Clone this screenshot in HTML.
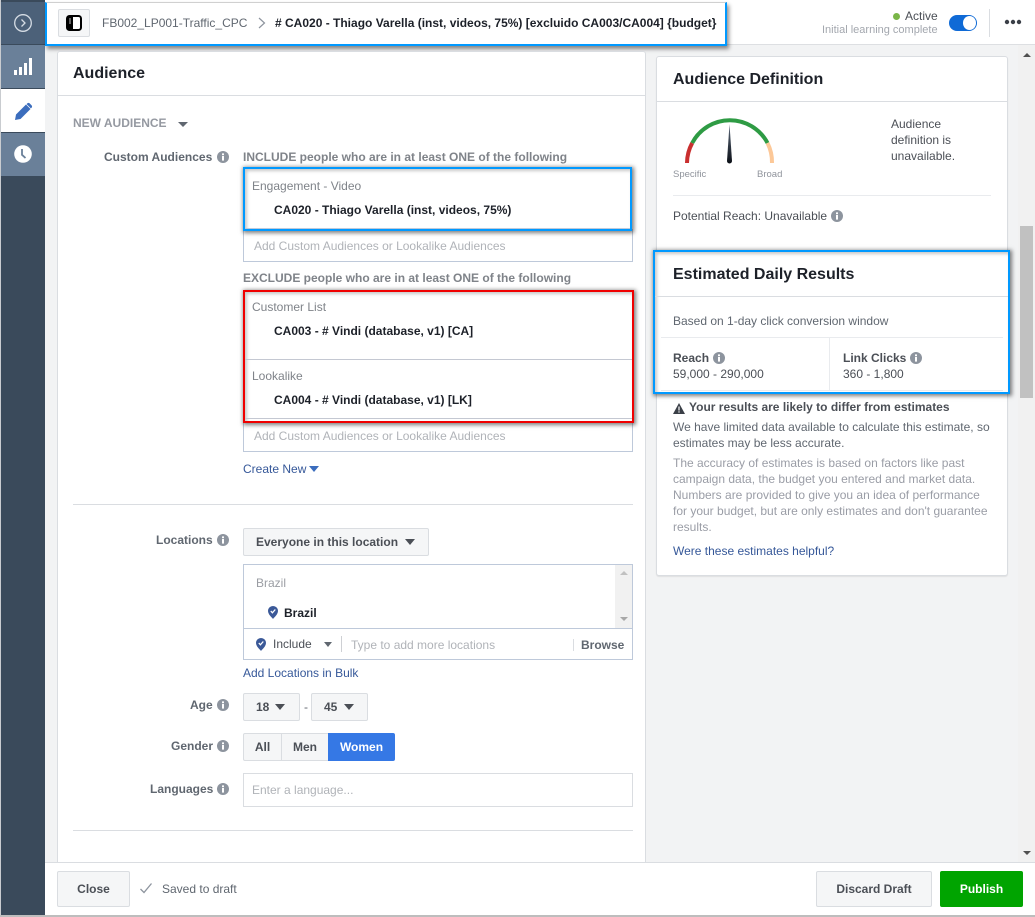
<!DOCTYPE html>
<html><head><meta charset="utf-8"><style>
html,body{margin:0;padding:0}
body{width:1035px;height:917px;position:relative;overflow:hidden;background:#f2f3f4;font-family:"Liberation Sans",Arial,sans-serif;font-size:12px;color:#1d2129}
.a{position:absolute}
.t{position:absolute;white-space:nowrap;line-height:16px}
.b{font-weight:bold}
.g{color:#606770}.l{color:#4b4f56}.p{color:#b0b3b8}.link{color:#365899}
.box{position:absolute;background:#fff;border:1px solid #bec9da;box-sizing:border-box}
.btn{position:absolute;box-sizing:border-box;background:#f5f6f7;border:1px solid #dadde1;border-radius:2px;color:#4b4f56;font-weight:bold;text-align:center}
.hr{position:absolute;height:1px;background:#dadde1}
.car{position:absolute;width:0;height:0;border-left:5.5px solid transparent;border-right:5.5px solid transparent;border-top:6px solid #4b4f56}
.i{position:absolute;width:12px;height:12px}
.hl{box-shadow:1px 1px 4px 1px rgba(0,0,0,.5),inset 2px 2px 3px rgba(0,0,0,.22)}
</style></head><body>
<svg width="0" height="0" style="position:absolute"><symbol id="inf" viewBox="0 0 12 12"><circle cx="6" cy="6" r="6" fill="#8d949e"/><rect x="5" y="5" width="2" height="4.6" fill="#fff"/><rect x="5" y="2.4" width="2" height="1.8" fill="#fff"/></symbol>
<symbol id="pin" viewBox="0 0 10 13"><path d="M5 13C3.5 11 0 8.5 0 4.8A5 4.8 0 0 1 10 4.8C10 8.5 6.5 11 5 13Z" fill="#3b5998"/><path d="M2.8 5L4.4 6.8L7.3 3.5" stroke="#fff" stroke-width="1.3" fill="none"/></symbol></svg>

<!-- sidebar -->
<div class="a" style="left:0;top:0;width:1px;height:917px;background:#c9ccd0"></div>
<div class="a" style="left:1px;top:0;width:44px;height:915px;background:#3a4a5b"></div>
<div class="a" style="left:1px;top:2px;width:44px;height:42px;background:#4c6179"></div>
<div class="a" style="left:1px;top:45px;width:44px;height:43px;background:#6a8099"></div>
<div class="a" style="left:1px;top:89px;width:44px;height:43px;background:#fff"></div>
<div class="a" style="left:1px;top:133px;width:44px;height:43px;background:#6a8099"></div>
<svg class="a" style="left:13px;top:13px" width="20" height="20" viewBox="0 0 20 20"><circle cx="10" cy="10" r="8.3" fill="none" stroke="#d5dce4" stroke-width="1.3"/><path d="M8.5 6.5L12 10L8.5 13.5" fill="none" stroke="#d5dce4" stroke-width="1.3"/></svg>
<svg class="a" style="left:13px;top:57px" width="20" height="20" viewBox="0 0 20 20" fill="#fff"><rect x="1" y="13" width="3" height="5"/><rect x="6" y="10" width="3" height="8"/><rect x="11" y="6" width="3" height="12"/><rect x="16" y="1" width="3" height="17"/></svg>
<svg class="a" style="left:14px;top:102px" width="19" height="19" viewBox="0 0 19 19"><path d="M1 18L2 12.5L12 2.5L16.500 7L6.500 17Z M13.200 1.500C14 .7 15 .7 15.800 1.500L17.500 3.200C18.300 4 18.300 5 17.500 5.800L16.900 6.400L12.600 2.100Z" fill="#3b6dbd"/></svg>
<svg class="a" style="left:14px;top:145px" width="18" height="18" viewBox="0 0 18 18"><circle cx="9" cy="9" r="8.800" fill="#fff"/><path d="M8 4V9.800L11.500 13" stroke="#6a8099" stroke-width="1.800" fill="none"/></svg>

<!-- top bar -->
<div class="a" style="left:45px;top:0;width:990px;height:44px;background:#fff;border-bottom:1px solid #dddfe2"></div>
<div class="a" style="left:45px;top:2px;width:682px;height:44px;box-sizing:border-box;border:2px solid #0099ff;border-top:1px solid #d0d0d0;background:#fff;box-shadow:2px 3px 4px rgba(0,0,0,.45)"></div>
<div class="a" style="left:58px;top:9px;width:32px;height:28px;box-sizing:border-box;background:#f5f6f7;border:1px solid #dadde1;border-radius:2px"></div>
<svg class="a" style="left:66px;top:15px" width="16" height="16" viewBox="0 0 16 16"><rect x="1" y="1" width="14" height="14" rx="2.500" fill="#fff" stroke="#000" stroke-width="2"/><path d="M1 2.500C1 1.500 1.500 1 2.500 1H7V15H2.500C1.500 15 1 14.500 1 13.500Z" fill="#000"/><path d="M3 4H5M3 6H5M3 8H5" stroke="#fff" stroke-width=".8"/></svg>
<div class="t g" style="left:102px;top:15px">FB002_LP001-Traffic_CPC</div>
<svg class="a" style="left:258px;top:17px" width="8" height="12" viewBox="0 0 8 12"><path d="M1 1L6.500 6L1 11" fill="none" stroke="#8d949e" stroke-width="1.200"/></svg>
<div class="t b" style="left:275px;top:15px;color:#1d2129">#  CA020 - Thiago Varella (inst, videos, 75%) [excluido CA003/CA004] {budget}</div>
<div class="a" style="left:893px;top:13px;width:7px;height:7px;border-radius:50%;background:#7ab648"></div>
<div class="t l" style="left:905px;top:8px">Active</div>
<div class="t p" style="left:822px;top:22px;font-size:11px;color:#a3a7ae;font-weight:400">Initial learning complete</div>
<div class="a" style="left:949px;top:15px;width:28px;height:16px;border-radius:8px;background:#0f6ad6"></div>
<div class="a" style="left:963px;top:16px;width:13px;height:14px;border-radius:50%;background:#fff"></div>
<div class="a" style="left:989px;top:9px;width:1px;height:28px;background:#dadde1"></div>
<svg class="a" style="left:1004px;top:19px" width="18" height="6" viewBox="0 0 18 6" fill="#3a3f47"><circle cx="3" cy="3" r="2.200"/><circle cx="9" cy="3" r="2.200"/><circle cx="15" cy="3" r="2.200"/></svg>

<!-- left card -->
<div class="a" style="left:57px;top:51px;width:589px;height:830px;box-sizing:border-box;background:#fff;border:1px solid #dadde1;border-radius:3px 3px 0 0"></div>
<div class="t b" style="left:73px;top:65px;font-size:16px;line-height:18px;color:#1d2129">Audience</div>
<div class="hr" style="left:58px;top:95px;width:587px"></div>
<div class="t b" style="left:73px;top:115px;color:#9599a1">NEW AUDIENCE</div>
<div class="car" style="left:178px;top:122px;border-left-width:5px;border-right-width:5px;border-top:5px solid #606770"></div>

<div class="t b g" style="left:104px;top:149px">Custom Audiences</div>
<svg class="i" style="left:217px;top:151px"><use href="#inf"/></svg>
<div class="t b g" style="left:243px;top:149px;color:#7f8389">INCLUDE people who are in at least ONE of the following</div>

<div class="box" style="left:243px;top:229px;width:390px;height:33px;border-top:none"></div>
<div class="t p" style="left:254px;top:238px">Add Custom Audiences or Lookalike Audiences</div>
<div class="a hl" style="left:243px;top:167px;width:389px;height:64px;box-sizing:border-box;border:2px solid #0099ff;background:#fff"></div>
<div class="a" style="left:245px;top:228px;width:385px;height:1px;background:#bec9da"></div>
<div class="t" style="left:252px;top:178px;color:#7f8389">Engagement - Video</div>
<div class="t b" style="left:274px;top:202px;color:#1d2129">CA020 - Thiago Varella (inst, videos, 75%)</div>

<div class="t b" style="left:243px;top:270px;color:#7f8389">EXCLUDE people who are in at least ONE of the following</div>
<div class="box" style="left:243px;top:420px;width:390px;height:32px;border-top:none"></div>
<div class="t p" style="left:254px;top:428px">Add Custom Audiences or Lookalike Audiences</div>
<div class="a hl" style="left:243px;top:290px;width:391px;height:133px;box-sizing:border-box;border:2px solid #f00000;background:#fff"></div>
<div class="a" style="left:245px;top:359px;width:387px;height:1px;background:#c4c8d2"></div>
<div class="a" style="left:245px;top:418px;width:387px;height:1px;background:#c4c8d2"></div>
<div class="t" style="left:252px;top:299px;color:#7f8389">Customer List</div>
<div class="t b" style="left:274px;top:323px;color:#1d2129">CA003 - # Vindi (database, v1) [CA]</div>
<div class="t" style="left:252px;top:368px;color:#7f8389">Lookalike</div>
<div class="t b" style="left:274px;top:392px;color:#1d2129">CA004 - # Vindi (database, v1) [LK]</div>

<div class="t link" style="left:243px;top:461px">Create New</div>
<div class="car" style="left:309px;top:466px;border-top-color:#3b6dbd"></div>
<div class="hr" style="left:73px;top:504px;width:560px"></div>

<div class="t b g" style="left:156px;top:532px">Locations</div>
<svg class="i" style="left:217px;top:534px"><use href="#inf"/></svg>
<div class="btn" style="left:243px;top:528px;width:186px;height:28px;line-height:26px;text-align:left;padding-left:12px">Everyone in this location</div>
<div class="car" style="left:405px;top:539px"></div>
<div class="box" style="left:243px;top:564px;width:390px;height:96px"></div>
<div class="a" style="left:615px;top:565px;width:17px;height:63px;background:#f1f1f1"></div>
<div class="car" style="left:620px;top:571px;border-left-width:4px;border-right-width:4px;border-top:none;border-bottom:4px solid #c1c1c1"></div>
<div class="car" style="left:620px;top:617px;border-left-width:4px;border-right-width:4px;border-top:4px solid #a8a8a8"></div>
<div class="t" style="left:256px;top:575px;color:#9a9da3">Brazil</div>
<svg class="a" style="left:268px;top:606px" width="10" height="13"><use href="#pin"/></svg>
<div class="t b" style="left:284px;top:605px;color:#1d2129">Brazil</div>
<div class="a" style="left:244px;top:628px;width:388px;height:1px;background:#bec9da"></div>
<svg class="a" style="left:256px;top:638px" width="10" height="13"><use href="#pin"/></svg>
<div class="t l" style="left:273px;top:636px">Include</div>
<div class="car" style="left:324px;top:642px;border-left-width:4.500px;border-right-width:4.500px;border-top:5px solid #606770"></div>
<div class="a" style="left:341px;top:636px;width:1px;height:16px;background:#ced0d4"></div>
<div class="t p" style="left:351px;top:637px">Type to add more locations</div>
<div class="a" style="left:573px;top:639px;width:1px;height:12px;background:#dadde1"></div>
<div class="t g b" style="left:581px;top:637px">Browse</div>
<div class="t link" style="left:243px;top:665px">Add Locations in Bulk</div>

<div class="t b g" style="left:190px;top:697px">Age</div>
<svg class="i" style="left:217px;top:699px"><use href="#inf"/></svg>
<div class="btn" style="left:243px;top:693px;width:57px;height:28px;line-height:26px;text-align:left;padding-left:12px;font-weight:bold">18</div>
<div class="car" style="left:275px;top:704px"></div>
<div class="t g" style="left:304px;top:699px">-</div>
<div class="btn" style="left:311px;top:693px;width:57px;height:28px;line-height:26px;text-align:left;padding-left:12px">45</div>
<div class="car" style="left:344px;top:704px"></div>

<div class="t b g" style="left:171px;top:738px">Gender</div>
<svg class="i" style="left:217px;top:740px"><use href="#inf"/></svg>
<div class="btn" style="left:243px;top:733px;width:39px;height:28px;line-height:26px;border-radius:2px 0 0 2px">All</div>
<div class="btn" style="left:281px;top:733px;width:48px;height:28px;line-height:26px;border-radius:0;border-left:1px solid #dadde1">Men</div>
<div class="btn" style="left:328px;top:733px;width:67px;height:28px;line-height:26px;background:#3578e5;border-color:#3578e5;color:#fff;border-radius:0 2px 2px 0">Women</div>

<div class="t b g" style="left:150px;top:781px">Languages</div>
<svg class="i" style="left:217px;top:783px"><use href="#inf"/></svg>
<div class="box" style="left:243px;top:773px;width:390px;height:34px;border-color:#dadde1"></div>
<div class="t p" style="left:252px;top:782px">Enter a language...</div>
<div class="hr" style="left:73px;top:830px;width:560px"></div>

<!-- right card -->
<div class="a" style="left:656px;top:56px;width:352px;height:520px;box-sizing:border-box;background:#fff;border:1px solid #dadde1;border-radius:3px;box-shadow:0 1px 1px rgba(0,0,0,.08)"></div>
<div class="t b" style="left:673px;top:71px;font-size:16px;line-height:18px">Audience Definition</div>
<div class="hr" style="left:657px;top:101px;width:350px"></div>
<svg class="a" style="left:680px;top:112px" width="100" height="56" viewBox="680 112 100 56">
<defs><linearGradient id="nd" x1="0" y1="1" x2="0" y2="0"><stop offset="0" stop-color="#0b0f16"/><stop offset="1" stop-color="#5d6a7c"/></linearGradient></defs>
<path d="M687 163A42.500 42.500 0 0 1 692.200 143" fill="none" stroke="#c92f2f" stroke-width="4"/>
<path d="M692.200 143A42.500 42.500 0 0 1 767.500 143" fill="none" stroke="#2e9b44" stroke-width="4"/>
<path d="M767.500 143A42.500 42.500 0 0 1 772 163" fill="none" stroke="#fcc898" stroke-width="4"/>
<path d="M729.500 124L732 161A2.500 2.500 0 0 1 727 161Z" fill="url(#nd)"/></svg>
<div class="t" style="left:673px;top:167px;font-size:9.500px;color:#90949c">Specific</div>
<div class="t" style="left:757px;top:167px;font-size:9.500px;color:#90949c">Broad</div>
<div class="t l" style="left:891px;top:116px">Audience</div>
<div class="t l" style="left:891px;top:132px">definition is</div>
<div class="t l" style="left:891px;top:148px">unavailable.</div>
<div class="hr" style="left:673px;top:195px;width:318px;background:#e9ebee"></div>
<div class="t l" style="left:673px;top:208px">Potential Reach: Unavailable</div>
<svg class="i" style="left:831px;top:210px"><use href="#inf"/></svg>

<div class="a hl" style="left:653px;top:250px;width:357px;height:144px;box-sizing:border-box;border:2px solid #0099ff;background:#fff"></div>
<div class="t b" style="left:673px;top:266px;font-size:16px;line-height:18px">Estimated Daily Results</div>
<div class="hr" style="left:655px;top:296px;width:353px"></div>
<div class="t g" style="left:673px;top:313px">Based on 1-day click conversion window</div>
<div class="hr" style="left:661px;top:337px;width:342px;background:#e9ebee"></div>
<div class="a" style="left:829px;top:338px;width:1px;height:52px;background:#e9ebee"></div>
<div class="hr" style="left:661px;top:390px;width:342px;background:#e9ebee"></div>
<div class="t l b" style="left:673px;top:350px">Reach</div>
<svg class="i" style="left:713px;top:352px"><use href="#inf"/></svg>
<div class="t l" style="left:673px;top:366px">59,000 - 290,000</div>
<div class="t l b" style="left:843px;top:350px">Link Clicks</div>
<svg class="i" style="left:910px;top:352px"><use href="#inf"/></svg>
<div class="t l" style="left:843px;top:366px">360 - 1,800</div>

<svg class="a" style="left:673px;top:403px" width="12" height="11" viewBox="0 0 12 11"><path d="M6 0L12 11H0Z" fill="#3a3f47"/><rect x="5.400" y="3.500" width="1.200" height="4" fill="#fff"/><rect x="5.400" y="8.300" width="1.200" height="1.300" fill="#fff"/></svg>
<div class="t b l" style="left:689px;top:399px">Your results are likely to differ from estimates</div>
<div class="t g" style="left:673px;top:419px">We have limited data available to calculate this estimate, so</div>
<div class="t g" style="left:673px;top:435px">estimates may be less accurate.</div>
<div class="t" style="left:673px;top:455px;color:#9a9da6">The accuracy of estimates is based on factors like past</div>
<div class="t" style="left:673px;top:471px;color:#9a9da6">campaign data, the budget you entered and market data.</div>
<div class="t" style="left:673px;top:487px;color:#9a9da6">Numbers are provided to give you an idea of performance</div>
<div class="t" style="left:673px;top:503px;color:#9a9da6">for your budget, but are only estimates and don't guarantee</div>
<div class="t" style="left:673px;top:519px;color:#9a9da6">results.</div>
<div class="t link" style="left:673px;top:543px">Were these estimates helpful?</div>

<!-- scrollbar -->
<div class="a" style="left:1018px;top:45px;width:17px;height:817px;background:#f1f1f1"></div>
<div class="a" style="left:1020px;top:226px;width:13px;height:172px;background:#c1c1c1"></div>
<div class="car" style="left:1023px;top:53px;border-left-width:4px;border-right-width:4px;border-top:none;border-bottom:4px solid #505050"></div>
<div class="car" style="left:1023px;top:851px;border-left-width:4px;border-right-width:4px;border-top:4px solid #505050"></div>

<!-- bottom bar -->
<div class="a" style="left:45px;top:862px;width:990px;height:53px;background:#fff;border-top:1px solid #dadde1;box-sizing:border-box"></div>
<div class="a" style="left:0;top:915px;width:1035px;height:2px;background:#bdbdbd"></div>
<div class="btn" style="left:57px;top:871px;width:73px;height:36px;line-height:34px">Close</div>
<svg class="a" style="left:139px;top:882px" width="14" height="12" viewBox="0 0 14 12"><path d="M1.500 7L5 10.500L12.500 1.500" fill="none" stroke="#8d949e" stroke-width="1.300"/></svg>
<div class="t g" style="left:162px;top:881px">Saved to draft</div>
<div class="btn" style="left:816px;top:871px;width:116px;height:36px;line-height:34px">Discard Draft</div>
<div class="btn" style="left:940px;top:871px;width:83px;height:36px;line-height:34px;background:#00a400;border-color:#00a400;color:#fff">Publish</div>
</body></html>
